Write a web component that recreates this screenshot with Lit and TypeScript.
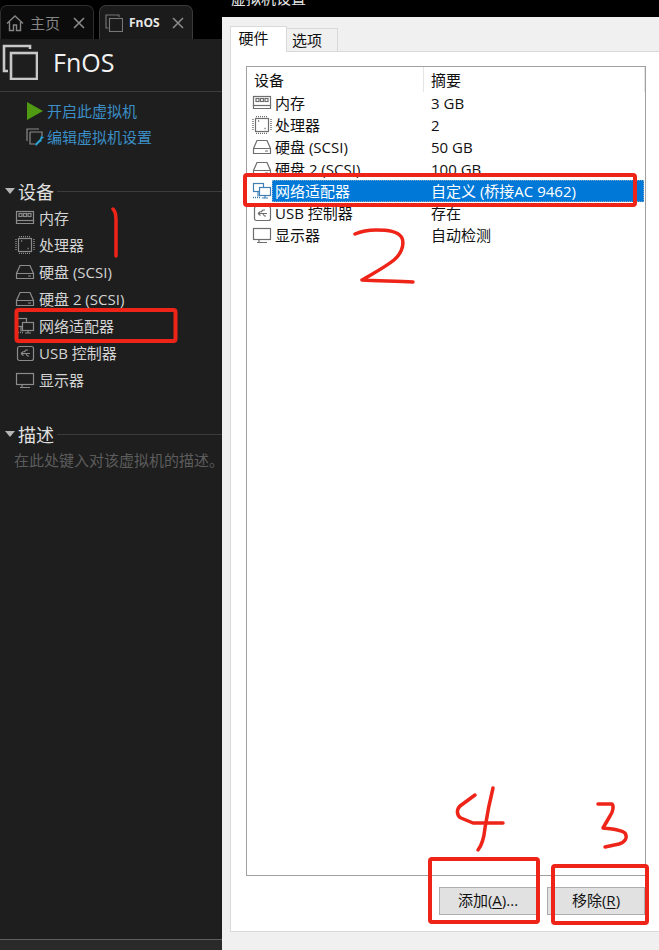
import { LitElement, html, css, svg } from "lit";
import { customElement } from "lit/decorators.js";

const icons: Record<string, any> = {
  ram: svg`<rect x="1.500" y="2.500" width="17" height="9"/><path d="M1.500 11.500h17v3h-17z"/><rect x="4" y="4.500" width="3" height="3"/><rect x="8.500" y="4.500" width="3" height="3"/><rect x="13" y="4.500" width="3" height="3"/>`,
  cpu: svg`<rect x="3.500" y="2.500" width="13" height="13"/><path class="pins" d="M4 .5h12M4 17.500h12M1 3v12M19 3v12"/><path d="M6 5h1.200M12.500 12.500h1.200" stroke-width="1.600"/>`,
  disk: svg`<path d="M5 2.500h10l3.500 8v5h-17v-5z"/><path d="M1.500 10.500h17M13 13h3"/>`,
  net: svg`<rect x="1.500" y="1.500" width="10" height="8"/><rect x="7.500" y="5.500" width="11" height="8" class="fill"/><path d="M13 13.500v2M10 16h6"/><path class="pins" d="M1 15.500h8"/><path d="M6 9.500v5"/>`,
  usb: svg`<rect x="2.500" y="2.500" width="16" height="14" rx="2"/><path d="M6 9.500h9M6 9.500l2.500-2M6 9.500l2.500 2M9 8l2-2h2M11 10l1.500 2H14"/>`,
  monitor: svg`<rect x="1.500" y="2.500" width="17" height="11"/><path d="M7 14v2M5 16.500h10"/>`,
};

const icon = (name: string) => html`<svg class="ico" viewBox="0 0 20 18" width="20" height="18">${icons[name]}</svg>`;

const devices: [string, string, string][] = [
  ["ram", "内存", "3 GB"],
  ["cpu", "处理器", "2"],
  ["disk", "硬盘 (SCSI)", "50 GB"],
  ["disk", "硬盘 2 (SCSI)", "100 GB"],
  ["net", "网络适配器", "自定义 (桥接AC 9462)"],
  ["usb", "USB 控制器", "存在"],
  ["monitor", "显示器", "自动检测"],
];

@customElement("app-root")
export class AppRoot extends LitElement {
  static styles = css`
    :host {
      display: block;
      width: 659px;
      height: 950px;
      font-family: "Open Sans", "Noto Sans CJK SC", sans-serif;
      font-size: 15px;
    }
    .page {
      position: relative;
      display: grid;
      grid-template-columns: 222px 1fr;
      width: 659px;
      height: 950px;
      overflow: hidden;
      background: #000;
    }
    .side {
      display: flex;
      flex-direction: column;
      background: #1e1e1e;
      color: #d6d6d6;
      min-width: 0;
    }
    .tabstrip {
      display: flex;
      gap: 5px;
      height: 39px;
      box-sizing: border-box;
      padding-top: 5px;
      background: #000;
      flex: none;
    }
    .tab {
      display: flex;
      align-items: center;
      width: 94px;
      box-sizing: border-box;
      border: 1px solid #2e2e2e;
      border-bottom: none;
      border-radius: 7px 7px 0 0;
      padding-left: 5px;
      color: #858585;
      font-size: 15px;
      background: #0c0c0c;
    }
    .tab.on {
      background: #1b1b1b;
      border-color: #3a3a3a;
      color: #e8e8e8;
      font-weight: 700;
      font-size: 12px;
    }
    .tabi {
      fill: none;
      stroke: #858585;
      stroke-width: 1.400;
      flex: none;
    }
    .tab .label {
      margin-left: 6px;
      flex: 1;
    }
    .tab .x {
      width: 12px;
      height: 12px;
      margin-right: 8px;
      stroke: #8a8a8a;
      stroke-width: 1.600;
      flex: none;
    }
    .head {
      display: flex;
      align-items: center;
      height: 53px;
      box-sizing: border-box;
      border-bottom: 1px solid #3c3c3c;
      padding: 0 0 7px 2px;
      gap: 15px;
      font-size: 25px;
      color: #f2f2f2;
      flex: none;
    }
    .vm {
      fill: none;
      stroke: #c8c8c8;
      stroke-width: 2.600;
      flex: none;
    }
    .tabi-vm {
      fill: none;
      stroke: #777;
      stroke-width: 2.200;
      flex: none;
    }
    .actions {
      display: flex;
      flex-direction: column;
      padding: 6px 0 0 26px;
    }
    .action {
      display: flex;
      align-items: center;
      height: 26px;
      gap: 3px;
      color: #3b8ec6;
      line-height: 26px;
    }
    .action svg {
      flex: none;
    }
    .sect {
      display: flex;
      align-items: center;
      height: 26px;
      padding-left: 5px;
      font-size: 18px;
      color: #e0e0e0;
      gap: 3px;
    }
    .sect::after {
      content: "";
      flex: 1;
      height: 1px;
      background: #3c3c3c;
    }
    .tri {
      width: 0;
      height: 0;
      border: 5px solid transparent;
      border-top: 6px solid #b5b5b5;
      border-bottom: none;
    }
    .sect.dev {
      margin-top: 28px;
    }
    .sect.desc {
      margin-top: 28px;
    }
    .item {
      display: flex;
      align-items: center;
      gap: 4px;
      height: 27px;
      padding-left: 15px;
      color: #d4d4d4;
      white-space: nowrap;
    }
    .ico {
      flex: none;
      fill: none;
      stroke: #8b8b8b;
      stroke-width: 1.200;
    }
    .ico .pins {
      stroke-dasharray: 1 1;
      stroke-width: 1.400;
    }
    .ico .fill {
      fill: #1e1e1e;
    }
    .descr {
      height: 26px;
      line-height: 26px;
      padding-left: 14px;
      color: #5c5c5c;
      white-space: nowrap;
    }
    .foot {
      margin-top: auto;
      height: 11px;
      box-sizing: border-box;
      background: #2a2a2a;
      border-top: 1px solid #5e5e5e;
      flex: none;
    }
    .main {
      display: flex;
      flex-direction: column;
      min-width: 0;
    }
    .title {
      display: flex;
      align-items: flex-end;
      height: 17px;
      overflow: hidden;
      background: #000;
      color: #e6e6e6;
      padding-left: 9px;
      flex: none;
    }
    .title span {
      line-height: 20px;
      margin-bottom: 9px;
      flex: none;
    }
    .dialog {
      flex: 1;
      display: flex;
      flex-direction: column;
      background: #f0f0f0;
      padding: 9px 0 18px 8px;
      min-height: 0;
      color: #111;
    }
    .tabs {
      display: flex;
      align-items: flex-end;
      height: 26px;
      flex: none;
      position: relative;
      z-index: 1;
      margin-bottom: -1px;
    }
    .dtab {
      box-sizing: border-box;
      border: 1px solid #d9d9d9;
      height: 24px;
      width: 51px;
      line-height: 23px;
      text-align: center;
      background: #f0f0f0;
      border-left: none;
      padding-right: 10px;
    }
    .dtab.on {
      height: 26px;
      width: 57px;
      line-height: 23px;
      background: #fff;
      border-left: 1px solid #d9d9d9;
      border-bottom: none;
      padding-right: 10px;
    }
    .panel {
      flex: 1;
      display: flex;
      flex-direction: column;
      min-height: 0;
      background: #fff;
      border: 1px solid #d9d9d9;
      border-right: none;
      padding: 14px 13px 16px 15px;
    }
    .list {
      flex: 1;
      min-height: 0;
      border: 1px solid #a0a0a0;
      background: #fff;
    }
    .lhead {
      display: flex;
      height: 25px;
      line-height: 27px;
    }
    .lhead .c1 {
      width: 177px;
      box-sizing: border-box;
      padding-left: 7px;
      border-right: 1px solid #e5e5e5;
    }
    .lhead .c2 {
      padding-left: 7px;
      flex: 1;
      border-right: 1px solid #e5e5e5;
    }
    .row {
      display: flex;
      align-items: center;
      height: 22px;
      padding-left: 5px;
      line-height: 22px;
      white-space: nowrap;
    }
    .row .ico {
      stroke: #6e6e6e;
    }
    .row .ico .fill {
      fill: #fff;
    }
    .row.sel .ico {
      stroke: #3f7fb5;
    }
    .cells {
      flex: 1;
      display: flex;
      height: 22px;
      box-sizing: border-box;
      margin-right: 1px;
      padding-left: 3px;
    }
    .cells .n {
      width: 156px;
    }
    .row.sel .cells {
      background: #0078d7;
      color: #fff;
      outline: 1px dotted #7fa6c8;
      outline-offset: -1px;
    }
    .btns {
      display: flex;
      justify-content: flex-end;
      gap: 10px;
      margin-top: 11px;
      padding-right: 1px;
      flex: none;
    }
    .btn {
      width: 98px;
      height: 28px;
      box-sizing: border-box;
      border: 1px solid #adadad;
      background: #e1e1e1;
      text-align: center;
      line-height: 25px;
      color: #111;
    }
    .btn u {
      text-underline-offset: 2px;
    }
    .ink {
      position: absolute;
      inset: 0;
      width: 659px;
      height: 950px;
      pointer-events: none;
      fill: none;
      stroke: #ee2418;
      stroke-linecap: round;
      stroke-linejoin: round;
    }
    .ink .box {
      stroke-width: 4;
    }
    .ink .hand {
      stroke-width: 3.500;
    }
  `;

  render() {
    return html`<div class="page">
      <aside class="side">
        <div class="tabstrip">
          <div class="tab">
            <svg class="tabi" viewBox="0 0 18 18" width="18" height="18"><path d="M1 9.500 9 2l8 7.500M3.500 8v8.500h4V11h3v5.500h4V8"/></svg>
            <span class="label">主页</span>
            <svg class="x" viewBox="0 0 12 12"><path d="M1 1l10 10M11 1 1 11"/></svg>
          </div>
          <div class="tab on">
            <svg class="tabi-vm" viewBox="0 0 36 36" width="18" height="18"><path d="M28 6V2H2v26h5"/><rect x="9" y="9" width="26" height="26"/></svg>
            <span class="label">FnOS</span>
            <svg class="x" viewBox="0 0 12 12"><path d="M1 1l10 10M11 1 1 11"/></svg>
          </div>
        </div>
        <div class="head">
          <svg class="vm" viewBox="0 0 36 36" width="36" height="36"><path d="M28 5V2H2v25h4"/><rect x="9" y="9" width="26" height="26"/></svg>
          <span>FnOS</span>
        </div>
        <div class="actions">
          <div class="action">
            <svg viewBox="0 0 18 18" width="18" height="18"><path d="M1 0v18l16-9z" fill="#4f9a12"/></svg>
            <span>开启此虚拟机</span>
          </div>
          <div class="action">
            <svg viewBox="0 0 18 18" width="18" height="18" fill="none" stroke="#8a8a8a" stroke-width="1.200"><path d="M13 1H1v12"/><path d="M4 4h12v4M4 4v12h5"/><path d="M9 16l5-5 1-3 3 1-2 2-1 1 1 1-2 1-4 4z" fill="#2aa5d8" stroke="none"/></svg>
            <span>编辑虚拟机设置</span>
          </div>
        </div>
        <div class="sect dev"><i class="tri"></i><span>设备</span></div>
        ${devices.map(([ic, name]) => html`<div class="item">${icon(ic)}<span>${name}</span></div>`)}
        <div class="sect desc"><i class="tri"></i><span>描述</span></div>
        <div class="descr">在此处键入对该虚拟机的描述。</div>
        <div class="foot"></div>
      </aside>
      <main class="main">
        <div class="title"><span>虚拟机设置</span></div>
        <div class="dialog">
          <div class="tabs">
            <div class="dtab on">硬件</div>
            <div class="dtab">选项</div>
          </div>
          <div class="panel">
            <div class="list">
              <div class="lhead"><div class="c1">设备</div><div class="c2">摘要</div></div>
              ${devices.map(
                ([ic, name, val], i) => html`<div class="row ${i === 4 ? "sel" : ""}">
                  ${icon(ic)}
                  <div class="cells"><span class="n">${name}</span><span>${val}</span></div>
                </div>`
              )}
            </div>
            <div class="btns">
              <div class="btn">添加(<u>A</u>)...</div>
              <div class="btn">移除(<u>R</u>)</div>
            </div>
          </div>
        </div>
      </main>
      <svg class="ink" viewBox="0 0 659 950">
        <rect class="box" x="16.500" y="310" width="159" height="31" rx="2"/>
        <rect class="box" x="245" y="175" width="390" height="30" rx="2"/>
        <rect class="box" x="430" y="859" width="108" height="63" rx="2"/>
        <rect class="box" x="553" y="866" width="94" height="57" rx="2"/>
        <path class="hand" d="M113 209C115 211 116 214 116 220V256"/>
        <path class="hand" d="M355 234C362 231 368 230 376 230C388 230 398 231 402 238C405 246 400 255 394 260C384 268 372 274 362 280C376 281 396 281 413 282"/>
        <path class="hand" d="M475 795L460 806C456 810 457 816 461 818L473 823H503"/>
        <path class="hand" d="M493 788C490 800 487 815 485 828C484 838 482 845 478 850"/>
        <path class="hand" d="M598 804H612C614 806 613 812 610 816L603 828C610 829 620 829 625 833C628 838 625 842 619 844L605 847"/>
      </svg>
    </div>`;
  }
}
